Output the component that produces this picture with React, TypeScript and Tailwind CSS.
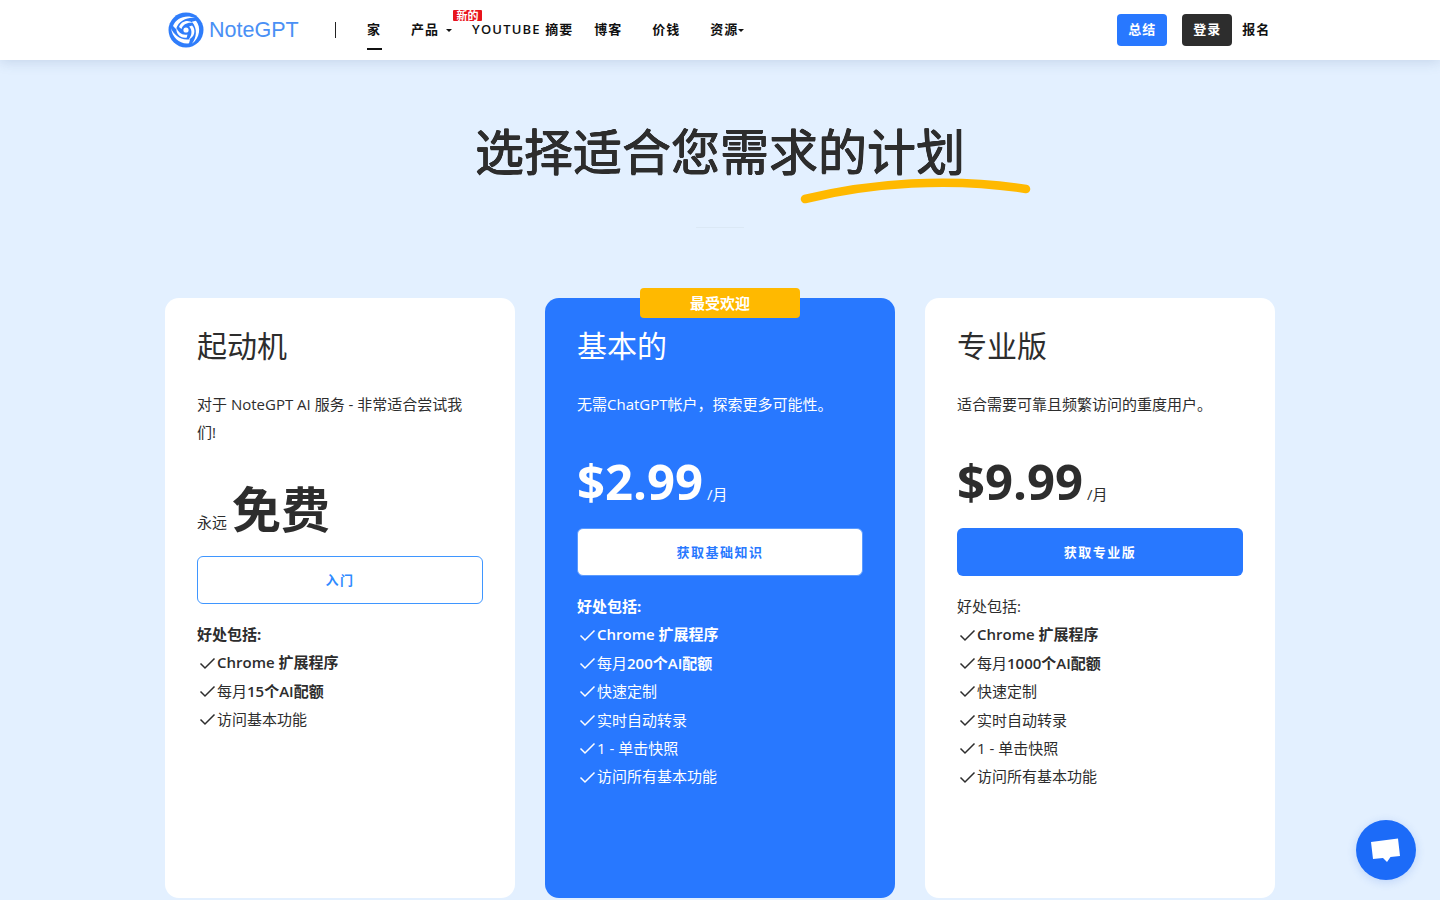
import React from 'react';

const font = "font-['Open_Sans','Noto_Sans_CJK_SC',sans-serif]";

interface Plan {
  name: string;
  desc: string;
  price?: string;
  features: React.ReactNode[];
  cta: string;
  kind: 'starter' | 'basic' | 'pro';
}

const plans: Plan[] = [
  {
    name: '起动机',
    desc: '对于 NoteGPT AI 服务 - 非常适合尝试我们!',
    cta: '入门',
    kind: 'starter',
    features: [
      <span className="font-semibold">Chrome 扩展程序</span>,
      <span>每月<b className="font-semibold">15个AI配额</b></span>,
      <span>访问基本功能</span>,
    ],
  },
  {
    name: '基本的',
    desc: '无需ChatGPT帐户，探索更多可能性。',
    price: '$2.99',
    cta: '获取基础知识',
    kind: 'basic',
    features: [
      <span className="font-semibold">Chrome 扩展程序</span>,
      <span>每月<b className="font-semibold">200个AI配额</b></span>,
      <span>快速定制</span>,
      <span>实时自动转录</span>,
      <span>1 - 单击快照</span>,
      <span>访问所有基本功能</span>,
    ],
  },
  {
    name: '专业版',
    desc: '适合需要可靠且频繁访问的重度用户。',
    price: '$9.99',
    cta: '获取专业版',
    kind: 'pro',
    features: [
      <span className="font-semibold">Chrome 扩展程序</span>,
      <span>每月<b className="font-semibold">1000个AI配额</b></span>,
      <span>快速定制</span>,
      <span>实时自动转录</span>,
      <span>1 - 单击快照</span>,
      <span>访问所有基本功能</span>,
    ],
  },
];

const Logo = () => (
  <svg width="36" height="36" viewBox="0 0 36 36" className="shrink-0">
    <circle cx="18" cy="18" r="17.5" fill="#2f7dfb" />
    <g fill="#fff">
      {[0, 120, 240].map(r => (
        <g key={r} transform={`rotate(${r} 18 18)`}>
          <path d="M5 14C8 6 18 2 27 6C20 5 11 8 8 17Z" />
          <path d="M11 15C13 9 20 7 25 11C20 10 15 12 13.5 17Z" />
        </g>
      ))}
    </g>
    <circle cx="18" cy="18" r="2.6" fill="#fff" />
  </svg>
);

const Caret = () => <span className="inline-block w-0 h-0 border-x-[3px] border-x-transparent border-t-[3px] border-t-[#111]" />;

const Check = ({ color }: { color: string }) => (
  <svg width="20" height="20" viewBox="0 0 20 20" className="shrink-0">
    <path d="M3.5 10.5L8 15L17.5 5.5" fill="none" stroke={color} strokeWidth="1.5" />
  </svg>
);

const Nav = () => (
  <header className="h-[60px] bg-white shadow-[0_2px_12px_rgba(60,90,140,0.18)] relative z-10 flex items-center pl-[168px]">
    <Logo />
    <span className="font-['Liberation_Sans',sans-serif] text-[21.5px] text-[#4a90f5] ml-[5px] w-[91px]">NoteGPT</span>
    <span className="w-px h-4 bg-[#222] ml-[35px]" />
    <nav className="flex items-center text-[13px] font-bold tracking-[1px] text-[#111] h-full">
      <a className="relative ml-[31px] w-[14px] whitespace-nowrap">
        家
        <span className="absolute left-0 top-[28px] w-[15px] h-0.5 bg-[#111]" />
      </a>
      <a className="ml-[30px] flex items-center gap-[7px] whitespace-nowrap">产品<Caret /></a>
      <a className="relative ml-[20px] whitespace-nowrap">
        <span className="font-semibold tracking-[1.2px]">YOUTUBE</span> 摘要
        <span className="absolute left-[-19px] top-[-10px] w-[29px] h-[11px] bg-[#e8141c] text-white text-[11px] leading-[11px] tracking-normal text-center rounded-[1px]">新的</span>
      </a>
      <a className="ml-[21px] whitespace-nowrap">博客</a>
      <a className="ml-[30px] whitespace-nowrap">价钱</a>
      <a className="ml-[30px] flex items-center whitespace-nowrap">资源<Caret /></a>
    </nav>
    <button className="ml-[373px] w-[50px] h-8 rounded bg-[#2878ff] text-white text-[13px] font-bold tracking-[1px]">总结</button>
    <button className="ml-[15px] w-[50px] h-8 rounded bg-[#2d2d2d] text-white text-[13px] font-bold tracking-[1px]">登录</button>
    <a className="ml-[10px] text-[13px] font-bold tracking-[1px] text-[#111]">报名</a>
  </header>
);

const PlanCard = ({ plan }: { plan: Plan }) => {
  const basic = plan.kind === 'basic';
  const pro = plan.kind === 'pro';
  const starter = plan.kind === 'starter';
  return (
    <div className={`relative h-[600px] w-[350px] rounded-[14px] px-8 pt-[26px] ${basic ? 'bg-[#2878ff] text-white' : 'bg-white text-[#2d2d2d]'}`}>
      {basic && (
        <div className="absolute -top-2.5 left-[95px] w-40 h-[30px] rounded bg-[#ffb900] text-white text-[15px] font-bold flex items-center justify-center">最受欢迎</div>
      )}
      <h3 className="text-[30px] leading-[44px] font-normal">{plan.name}</h3>
      <p className={`mt-[22px] text-[15px] leading-7 w-[272px] ${starter ? 'h-14' : 'h-7'}`}>{plan.desc}</p>
      {starter ? (
        <div className="mt-[29px] h-[68px] flex items-end">
          <span className="text-[15px] leading-5 mb-[11px]">永远</span>
          <span className="ml-[5px] text-[49px] leading-[68px] font-bold">免费</span>
        </div>
      ) : (
        <div className="mt-[29px] h-[68px] flex items-end">
          <span className="text-[49px] leading-[68px] font-bold">{plan.price}</span>
          <span className="ml-[4px] text-[15px] leading-5 mb-[11px]">/月</span>
        </div>
      )}
      <button
        className={`mt-[13px] block w-full h-12 pt-px rounded-md text-[13px] font-bold tracking-[1.5px] ${
          starter
            ? 'bg-white border border-[#3f96ff] text-[#2f8bff]'
            : basic
              ? 'bg-white border border-[#5b9bff] text-[#2878ff]'
              : 'bg-[#2878ff] text-white'
        }`}
      >
        {plan.cta}
      </button>
      <p className={`mt-[16px] text-[15px] leading-[28.4px] ${pro ? 'font-normal' : 'font-bold'}`}>好处包括:</p>
      <ul className="text-[15px]">
        {plan.features.map((f, i) => (
          <li key={i} className="flex items-center h-[28.4px]">
            <Check color={basic ? '#fff' : '#2d2d2d'} />
            {f}
          </li>
        ))}
      </ul>
    </div>
  );
};

export default function App() {
  return (
    <div className={`h-screen overflow-hidden bg-[#e3f0ff] ${font}`}>
      <Nav />
      <div className="relative w-fit mx-auto mt-[59px]">
        <h1 className="text-[49px] leading-[64px] font-normal text-[#2d2d2d] [text-shadow:0.6px_0_0_#2d2d2d,-0.4px_0_0_#2d2d2d,0_0.5px_0_#2d2d2d,0_-0.4px_0_#2d2d2d]">选择适合您需求的计划</h1>
        <svg width="232" height="30" viewBox="0 0 232 30" className="absolute left-[325px] top-[56px]">
          <path d="M5 24C70 8 150 2 226 14" fill="none" stroke="#ffb900" strokeWidth="8.5" strokeLinecap="round" />
        </svg>
      </div>
      <div className="w-12 h-px bg-[#dbe8f5] mx-auto mt-[44px]" />
      <main className="flex justify-center gap-[30px] mt-[70px]">
        {plans.map(p => (
          <PlanCard key={p.name} plan={p} />
        ))}
      </main>
      <button className="absolute left-[1356px] top-[820px] w-[60px] h-[60px] rounded-full bg-[#1c6bf8] shadow-[0_2px_10px_rgba(40,100,220,0.2)] flex items-center justify-center">
        <svg width="32" height="26" viewBox="0 0 32 26">
          <path d="M1 5L28 1.5L30 19L20.5 20L17 25L13 21L3 22Z" fill="#fff" />
        </svg>
      </button>
    </div>
  );
}
